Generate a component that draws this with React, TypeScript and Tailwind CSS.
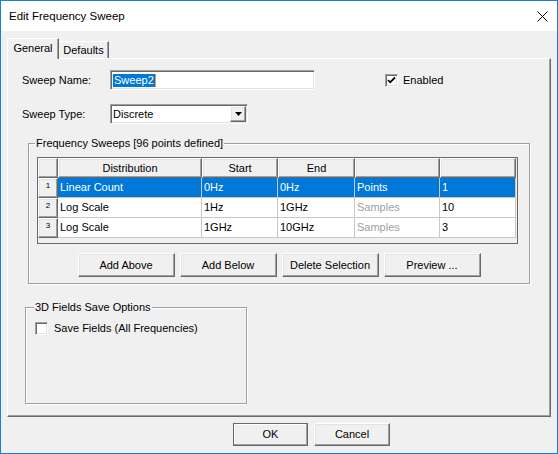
import React from 'react';

const raised =
  'bg-[#f0f0f0] border border-t-white border-l-white border-b-[#696969] border-r-[#696969] shadow-[inset_-1px_-1px_0_#a0a0a0,inset_1px_1px_0_#e3e3e3]';
const sunken =
  'bg-white border border-t-[#a0a0a0] border-l-[#a0a0a0] border-b-white border-r-white shadow-[inset_1px_1px_0_#696969,inset_-1px_-1px_0_#e3e3e3]';

const rows = [
  { n: 1, dist: 'Linear Count', start: '0Hz', end: '0Hz', unit: 'Points', count: '1', selected: true },
  { n: 2, dist: 'Log Scale', start: '1Hz', end: '1GHz', unit: 'Samples', count: '10', selected: false },
  { n: 3, dist: 'Log Scale', start: '1GHz', end: '10GHz', unit: 'Samples', count: '3', selected: false },
];

const headers = ['Distribution', 'Start', 'End', '', ''];

function Btn({ label, className = '' }: { label: string; className?: string }) {
  return (
    <div className={`${raised} flex items-center justify-center ${className}`}>
      {label}
    </div>
  );
}

function Grid() {
  return (
    <div className="w-[481px] h-[87px] border border-[#696969] bg-[#f0f0f0] ml-[8px] mt-[13px]">
      <div className="grid grid-cols-[20px_144px_76px_77px_85px_76px] auto-rows-[20px]">
        {/* header row */}
        <div className={raised} />
        {headers.map((h, i) => (
          <div key={i} className={`${raised} flex items-center justify-center`}>
            {h}
          </div>
        ))}
        {rows.map((r) => {
          const cell = `flex items-center pl-[2px] border-r border-b border-[#c8c8c8] ${
            r.selected ? 'bg-[#0078d7] text-white' : 'bg-white'
          }`;
          return (
            <React.Fragment key={r.n}>
              <div className={`${raised} flex justify-center pt-[2px] text-[8px] leading-[10px]`}>{r.n}</div>
              <div className={cell}>{r.dist}</div>
              <div className={cell}>{r.start}</div>
              <div className={cell}>{r.end}</div>
              <div className={`${cell} ${r.selected ? '' : 'text-[#a0a0a0]'}`}>{r.unit}</div>
              <div className={cell}>{r.count}</div>
            </React.Fragment>
          );
        })}
      </div>
    </div>
  );
}

export default function App() {
  return (
    <div className="w-[558px] h-[454px] bg-[#f0f0f0] border border-[#1c7fd5] flex flex-col font-['Liberation_Sans',Arial,sans-serif] text-[11px] leading-[13px] text-black">
      {/* Title bar */}
      <div className="h-[30px] shrink-0 bg-white flex items-center justify-between pl-[8px] pr-[9px]">
        <span className="text-[11.5px]">Edit Frequency Sweep</span>
        <svg width="11" height="11" viewBox="0 0 11 11">
          <path d="M0.5 0.5L10.5 10.5M10.5 0.5L0.5 10.5" stroke="#000" strokeWidth="1" />
        </svg>
      </div>

      <div className="flex flex-col px-[6px] pt-[7px]">
        {/* Tabs */}
        <div className="h-[20px] flex items-end">
          <div className="relative z-10 h-[21px] -mb-[1px] w-[52px] bg-[#f0f0f0] border-t border-l border-white border-r border-r-[#696969] shadow-[inset_-1px_0_0_#a0a0a0] flex items-start justify-center pt-[3px]">
            General
          </div>
          <div className="h-[17px] w-[50px] bg-[#f0f0f0] border-t border-white border-r border-r-[#696969] shadow-[inset_-1px_0_0_#a0a0a0] flex items-start justify-center pt-[2px]">
            Defaults
          </div>
        </div>

        {/* Tab pane */}
        <div className="h-[359px] w-[544px] bg-[#f0f0f0] border border-t-white border-l-white border-b-[#696969] border-r-[#696969] shadow-[inset_-1px_-1px_0_#a0a0a0] flex flex-col">
          {/* Sweep name */}
          <div className="flex items-center mt-[11px] h-[20px]">
            <span className="ml-[14px] w-[88px]">Sweep Name:</span>
            <div className={`${sunken} w-[205px] h-[20px] flex items-center pl-[2px]`}>
              <span className="bg-[#0078d7] text-white px-[1px]">Sweep2</span>
              <span className="w-[1px] h-[13px] bg-[#ff8a28]" />
            </div>
            <div className={`${sunken} ml-[70px] w-[13px] h-[13px] flex items-center justify-center`}>
              <svg width="9" height="9" viewBox="0 0 9 9">
                <path d="M1 4L3.2 6.3L8 1.5" stroke="#000" strokeWidth="1.8" fill="none" />
              </svg>
            </div>
            <span className="ml-[5px]">Enabled</span>
          </div>

          {/* Sweep type */}
          <div className="flex items-center mt-[14px] h-[20px]">
            <span className="ml-[14px] w-[88px]">Sweep Type:</span>
            <div className={`${sunken} w-[138px] h-[20px] flex items-center justify-between pl-[2px] pr-[1px]`}>
              <span>Discrete</span>
              <div className={`${raised} w-[16px] h-[16px] flex items-center justify-center`}>
                <svg width="7" height="4" viewBox="0 0 7 4">
                  <path d="M0 0H7L3.5 4Z" fill="#000" />
                </svg>
              </div>
            </div>
          </div>

          {/* Frequency sweeps group */}
          <div className="relative ml-[20px] mt-[19px] w-[502px] h-[141px] border border-[#a0a0a0] shadow-[1px_1px_0_#fff,inset_1px_1px_0_#fff] flex flex-col">
            <span className="absolute left-[6px] -top-[7px] bg-[#f0f0f0] px-[1px]">
              Frequency Sweeps [96 points defined]
            </span>
            <Grid />
            <div className="flex justify-center gap-[5px] mt-[9px]">
              <Btn label="Add Above" className="w-[97px] h-[24px]" />
              <Btn label="Add Below" className="w-[97px] h-[24px]" />
              <Btn label="Delete Selection" className="w-[97px] h-[24px]" />
              <Btn label="Preview ..." className="w-[97px] h-[24px]" />
            </div>
          </div>

          {/* 3D fields group */}
          <div className="relative ml-[17px] mt-[23px] w-[222px] h-[97px] border border-[#a0a0a0] shadow-[1px_1px_0_#fff,inset_1px_1px_0_#fff]">
            <span className="absolute left-[8px] -top-[7px] bg-[#f0f0f0] px-[1px]">3D Fields Save Options</span>
            <div className="flex items-center ml-[9px] mt-[14px]">
              <div className={`${sunken} w-[13px] h-[13px]`} />
              <span className="ml-[6px]">Save Fields (All Frequencies)</span>
            </div>
          </div>
        </div>

        {/* Dialog buttons */}
        <div className="flex gap-[6px] mt-[6px] ml-[226px]">
          <div className="w-[75px] h-[23px] bg-[#f0f0f0] border border-[#696969] shadow-[inset_-1px_-1px_0_#a0a0a0,inset_1px_1px_0_#fff] flex items-center justify-center">
            OK
          </div>
          <Btn label="Cancel" className="w-[76px] h-[23px]" />
        </div>
      </div>
    </div>
  );
}
